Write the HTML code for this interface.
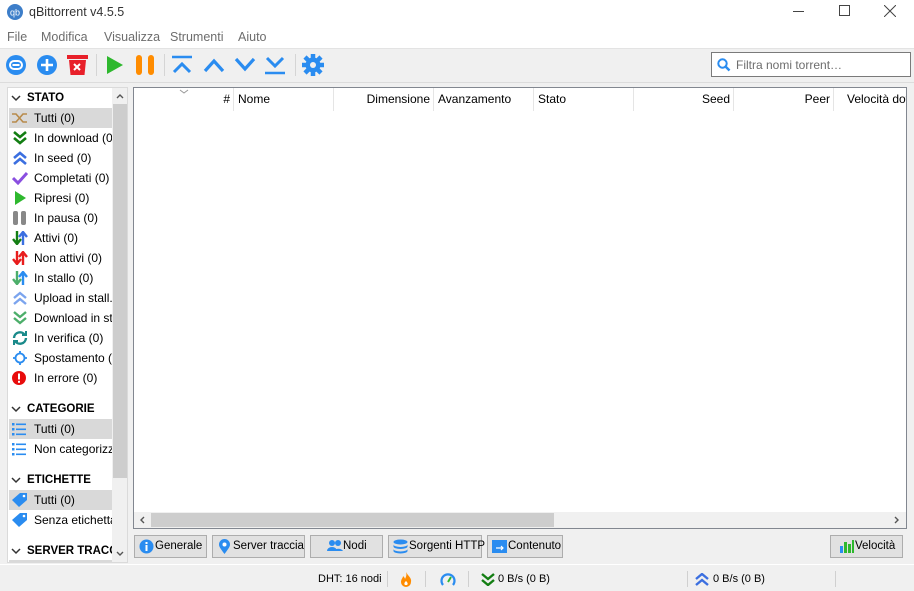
<!DOCTYPE html>
<html><head><meta charset="utf-8"><style>
*{box-sizing:border-box;margin:0;padding:0}
body{width:914px;height:589px;overflow:hidden;background:#f0f0f0;font-family:"Liberation Sans",sans-serif;font-size:12px;color:#000;position:relative}
.abs{position:absolute}
.title{left:0;top:0;width:914px;height:28px;background:#fff}
.menu{left:0;top:28px;width:914px;height:20px;background:#fff;color:#6d6d6d;font-size:12.5px}
.menu span{position:absolute;top:2px}
.side{left:7px;top:87px;width:121px;height:476px;background:#fff;border:1px solid #dadada;overflow:hidden}
.row{position:absolute;left:1px;width:103px;height:20px;line-height:20px;white-space:nowrap;overflow:hidden;font-size:12px}
.row svg{position:absolute;left:3px;top:3px}
.row span{position:absolute;left:25px}
.sel{background:#d9d9d9}
.hdr{font-weight:bold;font-size:11.5px}
.list{left:133px;top:87px;width:774px;height:442px;background:#fff;border:1px solid #828790;overflow:hidden}
.th{position:absolute;top:0;height:23px;line-height:23px;border-right:1px solid #e5e5e5;padding:0 3px;white-space:nowrap;overflow:hidden}
.btn{position:absolute;top:535px;height:23px;background:#e1e1e1;border:1px solid #adadad;line-height:21px;font-size:11.5px;white-space:nowrap}
.btn svg{position:absolute;left:4px;top:3px}
.btn span{position:absolute;left:20px}
.sb{top:567px;height:24px;line-height:24px;font-size:11px}
.sep{position:absolute;top:571px;width:1px;height:16px;background:#d0d0d0}
</style></head><body>
<div class="abs title">
 <svg class="abs" style="left:7px;top:4px" width="16" height="16"><circle cx="8" cy="8" r="8" fill="#3d7ec9"/><text x="8" y="11.5" font-size="9" fill="#fff" text-anchor="middle" font-family="Liberation Sans">qb</text></svg>
 <div class="abs" style="left:29px;top:5px;font-size:12.5px;color:#333">qBittorrent v4.5.5</div>
 <div class="abs" style="left:793px;top:11px;width:11px;height:1px;background:#444"></div>
 <div class="abs" style="left:839px;top:5px;width:11px;height:11px;border:1px solid #444"></div>
 <svg class="abs" style="left:884px;top:5px" width="12" height="12"><path d="M0 0L12 12M12 0L0 12" stroke="#444" stroke-width="1"/></svg>
</div>
<div class="abs menu"><span style="left:7px">File</span><span style="left:41px">Modifica</span><span style="left:104px">Visualizza</span><span style="left:170px">Strumenti</span><span style="left:238px">Aiuto</span></div>
<div class="abs" style="left:0;top:48px;width:914px;height:1px;background:#e3e3e3"></div>
<svg class="abs" style="left:0;top:50px" width="330" height="30">
 <circle cx="16" cy="15" r="10" fill="#2a8cf0"/><rect x="10" y="11" width="12" height="8" rx="4" fill="none" stroke="#fff" stroke-width="2"/><path d="M12.5 15h7" stroke="#fff" stroke-width="2"/>
 <circle cx="47" cy="15" r="10" fill="#2a8cf0"/><path d="M41 15h12M47 9v12" stroke="#fff" stroke-width="2.6"/>
 <rect x="67" y="5" width="21" height="4" fill="#e8202a"/><path d="M69 10h17l-1.5 15h-14z" fill="#e8202a"/><path d="M74 14l6 6M80 14l-6 6" stroke="#fff" stroke-width="2"/>
 <rect x="96" y="4" width="1" height="22" fill="#d5d5d5"/>
 <path d="M107 6l16 9-16 9z" fill="#2eb82e"/>
 <rect x="136" y="5" width="6" height="20" rx="3" fill="#ff8c00"/><rect x="148" y="5" width="6" height="20" rx="3" fill="#ff8c00"/>
 <rect x="164" y="4" width="1" height="22" fill="#d5d5d5"/>
 <path d="M172 7h20" stroke="#2a8cf0" stroke-width="2.5"/><path d="M174 22l8-8 8 8" fill="none" stroke="#2a8cf0" stroke-width="3"/>
 <path d="M205 21l9-10 9 10" fill="none" stroke="#2a8cf0" stroke-width="3.2"/>
 <path d="M236 9l9 10 9-10" fill="none" stroke="#2a8cf0" stroke-width="3.2"/>
 <path d="M267 8l8 8 8-8" fill="none" stroke="#2a8cf0" stroke-width="3"/><path d="M265 23h20" stroke="#2a8cf0" stroke-width="2.5"/>
 <rect x="295" y="4" width="1" height="22" fill="#d5d5d5"/>
 <circle cx="313" cy="15" r="7.5" fill="#2a8cf0"/><g stroke="#2a8cf0" stroke-width="4.5"><path d="M313 4v22M302 15h22M305 7l16 16M321 7l-16 16"/></g><circle cx="313" cy="15" r="3" fill="#f0f0f0"/>
</svg>
<div class="abs" style="left:711px;top:52px;width:200px;height:25px;background:#fff;border:1px solid #7a7a7a">
 <svg class="abs" style="left:5px;top:5px" width="14" height="14"><circle cx="5.5" cy="5.5" r="4.2" fill="none" stroke="#2a8cf0" stroke-width="2"/><path d="M8.5 8.5l4 4" stroke="#2a8cf0" stroke-width="2.5"/></svg>
 <div class="abs" style="left:24px;top:5px;color:#6d6d6d;font-size:12px">Filtra nomi torrent…</div>
</div>
<div class="abs" style="left:0;top:82px;width:914px;height:1px;background:#dcdcdc"></div>
<div class="abs side">
 <div class="row hdr" style="top:0"><svg width="10" height="10" style="left:2px;top:5px"><path d="M1 3l4 4 4-4" fill="none" stroke="#333" stroke-width="1.5"/></svg><span style="left:18px">STATO</span></div>
 <div class="row sel" style="top:20px"><svg width="16" height="14"><path d="M0 3h4l7 8h4M0 11h4l7-8h4" fill="none" stroke="#b78a4a" stroke-width="1.6"/></svg><span>Tutti (0)</span></div>
 <div class="row" style="top:40px"><svg width="16" height="14"><path d="M2 1l6 5 6-5M2 7l6 5 6-5" fill="none" stroke="#137e13" stroke-width="2.6"/></svg><span>In download (0)</span></div>
 <div class="row" style="top:60px"><svg width="16" height="14"><path d="M2 7l6-5 6 5M2 13l6-5 6 5" fill="none" stroke="#3b6fe0" stroke-width="2.6"/></svg><span>In seed (0)</span></div>
 <div class="row" style="top:80px"><svg width="16" height="14"><path d="M1 7l5 5 9-10" fill="none" stroke="#8a4fe0" stroke-width="3"/></svg><span>Completati (0)</span></div>
 <div class="row" style="top:100px"><svg width="16" height="14"><path d="M3 0l11 7-11 7z" fill="#2eb82e"/></svg><span>Ripresi (0)</span></div>
 <div class="row" style="top:120px"><svg width="16" height="14"><rect x="1" y="0" width="5" height="14" rx="2" fill="#888"/><rect x="9" y="0" width="5" height="14" rx="2" fill="#888"/></svg><span>In pausa (0)</span></div>
 <div class="row" style="top:140px"><svg width="16" height="14"><path d="M5 0v12M1 8l4 5 4-5" fill="none" stroke="#137e13" stroke-width="2.4"/><path d="M11 14V2M7 6l4-5 4 5" fill="none" stroke="#3b6fe0" stroke-width="2.4"/></svg><span>Attivi (0)</span></div>
 <div class="row" style="top:160px"><svg width="16" height="14"><path d="M5 0v12M1 8l4 5 4-5M11 14V2M7 6l4-5 4 5" fill="none" stroke="#e81d1d" stroke-width="2.4"/></svg><span>Non attivi (0)</span></div>
 <div class="row" style="top:180px"><svg width="16" height="14"><path d="M5 0v12M1 8l4 5 4-5" fill="none" stroke="#4cae6a" stroke-width="2.4"/><path d="M11 14V2M7 6l4-5 4 5" fill="none" stroke="#2a8cf0" stroke-width="2.4"/></svg><span>In stallo (0)</span></div>
 <div class="row" style="top:200px"><svg width="16" height="14"><path d="M2 7l6-5 6 5M2 13l6-5 6 5" fill="none" stroke="#7ba4ee" stroke-width="2.4"/></svg><span>Upload in stall.</span></div>
 <div class="row" style="top:220px"><svg width="16" height="14"><path d="M2 1l6 5 6-5M2 7l6 5 6-5" fill="none" stroke="#4cae6a" stroke-width="2.4"/></svg><span>Download in st</span></div>
 <div class="row" style="top:240px"><svg width="16" height="14"><path d="M2 7a6 6 0 0 1 11-3M14 7a6 6 0 0 1-11 3" fill="none" stroke="#1a8a8a" stroke-width="2.4"/><path d="M10 4h4V0M6 10H2v4" fill="none" stroke="#1a8a8a" stroke-width="2"/></svg><span>In verifica (0)</span></div>
 <div class="row" style="top:260px"><svg width="16" height="14"><circle cx="8" cy="7" r="4.5" fill="none" stroke="#2a8cf0" stroke-width="1.8"/><path d="M8 0v3M8 11v3M1 7h3M12 7h3" stroke="#2a8cf0" stroke-width="1.8"/></svg><span>Spostamento (0)</span></div>
 <div class="row" style="top:280px"><svg width="16" height="14"><circle cx="7" cy="7" r="7" fill="#e80c0c"/><rect x="6" y="2.5" width="2" height="6" fill="#fff"/><rect x="6" y="9.8" width="2" height="2" fill="#fff"/></svg><span>In errore (0)</span></div>
 <div class="row hdr" style="top:311px"><svg width="10" height="10" style="left:2px;top:5px"><path d="M1 3l4 4 4-4" fill="none" stroke="#333" stroke-width="1.5"/></svg><span style="left:18px">CATEGORIE</span></div>
 <div class="row sel" style="top:331px"><svg width="16" height="14"><g fill="#2a8cf0"><rect x="0" y="1" width="2.5" height="2.5"/><rect x="0" y="6" width="2.5" height="2.5"/><rect x="0" y="11" width="2.5" height="2.5"/><rect x="4" y="1.5" width="10" height="1.6"/><rect x="4" y="6.5" width="10" height="1.6"/><rect x="4" y="11.5" width="10" height="1.6"/></g></svg><span>Tutti (0)</span></div>
 <div class="row" style="top:351px"><svg width="16" height="14"><g fill="#2a8cf0"><rect x="0" y="1" width="2.5" height="2.5"/><rect x="0" y="6" width="2.5" height="2.5"/><rect x="0" y="11" width="2.5" height="2.5"/><rect x="4" y="1.5" width="10" height="1.6"/><rect x="4" y="6.5" width="10" height="1.6"/><rect x="4" y="11.5" width="10" height="1.6"/></g></svg><span>Non categorizzati</span></div>
 <div class="row hdr" style="top:382px"><svg width="10" height="10" style="left:2px;top:5px"><path d="M1 3l4 4 4-4" fill="none" stroke="#333" stroke-width="1.5"/></svg><span style="left:18px">ETICHETTE</span></div>
 <div class="row sel" style="top:402px"><svg width="16" height="14"><path d="M8 0h7v7l-8 7-7-7z" fill="#2a8cf0"/><circle cx="12" cy="3" r="1.3" fill="#fff"/></svg><span>Tutti (0)</span></div>
 <div class="row" style="top:422px"><svg width="16" height="14"><path d="M8 0h7v7l-8 7-7-7z" fill="#2a8cf0"/><circle cx="12" cy="3" r="1.3" fill="#fff"/></svg><span>Senza etichetta</span></div>
 <div class="row hdr" style="top:453px"><svg width="10" height="10" style="left:2px;top:5px"><path d="M1 3l4 4 4-4" fill="none" stroke="#333" stroke-width="1.5"/></svg><span style="left:18px">SERVER TRACCIATORI</span></div>
 <div class="abs" style="left:1px;top:472px;width:103px;height:3px;background:#d9d9d9"></div>
 <div class="abs" style="left:104px;top:0;width:16px;height:476px;background:#f0f0f0">
  <svg class="abs" style="left:4px;top:5px" width="8" height="6"><path d="M1 5l3-3 3 3" fill="none" stroke="#555" stroke-width="1.4"/></svg>
  <div class="abs" style="left:1px;top:16px;width:14px;height:374px;background:#cdcdcd"></div>
  <svg class="abs" style="left:4px;top:463px" width="8" height="6"><path d="M1 1l3 3 3-3" fill="none" stroke="#555" stroke-width="1.4"/></svg>
 </div>
</div>
<div class="abs list">
 <svg class="abs" style="left:45px;top:1px" width="10" height="6"><path d="M1 1l4 3 4-3" fill="none" stroke="#999" stroke-width="1"/></svg>
 <div class="th" style="left:0;width:100px;text-align:right">#</div>
 <div class="th" style="left:100px;width:100px;padding-left:4px">Nome</div>
 <div class="th" style="left:200px;width:100px;text-align:right">Dimensione</div>
 <div class="th" style="left:300px;width:100px;padding-left:4px">Avanzamento</div>
 <div class="th" style="left:400px;width:100px;padding-left:4px">Stato</div>
 <div class="th" style="left:500px;width:100px;text-align:right">Seed</div>
 <div class="th" style="left:600px;width:100px;text-align:right">Peer</div>
 <div class="th" style="left:700px;width:72px;border:none;padding-left:13px">Velocità download</div>
 <div class="abs" style="left:0;top:424px;width:772px;height:16px;background:#f0f0f0">
  <svg class="abs" style="left:5px;top:4px" width="6" height="8"><path d="M5 1L2 4l3 3" fill="none" stroke="#555" stroke-width="1.4"/></svg>
  <div class="abs" style="left:17px;top:1px;width:403px;height:14px;background:#cdcdcd"></div>
  <svg class="abs" style="left:760px;top:4px" width="6" height="8"><path d="M1 1l3 3-3 3" fill="none" stroke="#555" stroke-width="1.4"/></svg>
 </div>
</div>
<div class="btn" style="left:134px;width:73px"><svg width="15" height="15"><circle cx="7.5" cy="7.5" r="7" fill="#2a8cf0"/><rect x="6.5" y="6" width="2" height="6" fill="#fff"/><rect x="6.5" y="3" width="2" height="2" fill="#fff"/></svg><span>Generale</span></div>
<div class="btn" style="left:212px;width:93px"><svg width="15" height="16"><path d="M7.5 15C3 9 2 7.5 2 5.5a5.5 5.5 0 0 1 11 0c0 2-1 3.5-5.5 9.5z" fill="#2a8cf0"/><circle cx="7.5" cy="5.5" r="2" fill="#fff"/></svg><span>Server traccia</span></div>
<div class="btn" style="left:310px;width:73px"><svg width="16" height="14" style="left:16px"><circle cx="5" cy="4" r="3" fill="#2a8cf0"/><circle cx="11" cy="4" r="3" fill="#2a8cf0"/><path d="M0 12a5 4 0 0 1 10 0zM7 12a5 4 0 0 1 9 0z" fill="#2a8cf0"/></svg><span style="left:32px">Nodi</span></div>
<div class="btn" style="left:388px;width:94px"><svg width="15" height="16"><ellipse cx="7.5" cy="3" rx="7" ry="2.5" fill="#2a8cf0"/><path d="M0.5 5.5a7 2.5 0 0 0 14 0v2a7 2.5 0 0 1-14 0zM0.5 10a7 2.5 0 0 0 14 0v2a7 2.5 0 0 1-14 0z" fill="#2a8cf0"/></svg><span>Sorgenti HTTP</span></div>
<div class="btn" style="left:487px;width:76px"><svg width="15" height="15"><rect x="0" y="1" width="15" height="13" fill="#2a8cf0"/><path d="M4 9h7M9 7l2 2-2 2" fill="none" stroke="#fff" stroke-width="1.2"/></svg><span>Contenuto</span></div>
<div class="btn" style="left:830px;width:73px"><svg width="14" height="14" style="left:9px"><rect x="0" y="7" width="3" height="7" fill="#2a8cf0"/><rect x="4" y="3" width="3" height="11" fill="#2eb82e"/><rect x="8" y="5" width="3" height="9" fill="#2eb82e"/><rect x="12" y="1" width="2" height="13" fill="#2eb82e"/></svg><span style="left:24px">Velocità</span></div>
<div class="abs" style="left:0;top:564px;width:914px;height:1px;background:#fff"></div>
<div class="abs sb" style="left:318px">DHT: 16 nodi</div>
<div class="sep" style="left:387px"></div>
<svg class="abs" style="left:400px;top:572px" width="12" height="15"><path d="M6 0C8 4 12 6 11 10a5 5 0 0 1-10 0C1 7 3 6 3 4c1 1 2 2 2 3C6 5 7 3 6 0z" fill="#ff8c00"/><path d="M6 9c1 1 2 2 1.5 3.5a2 2 0 0 1-3 0C4 11 5 10 6 9z" fill="#fff"/></svg>
<div class="sep" style="left:425px"></div>
<svg class="abs" style="left:440px;top:572px" width="16" height="15"><path d="M3 13A6.5 6.5 0 1 1 13 13" fill="none" stroke="#2a8cf0" stroke-width="2.2"/><path d="M8 10l3-5" stroke="#2eb82e" stroke-width="2"/></svg>
<div class="sep" style="left:468px"></div>
<svg class="abs" style="left:481px;top:573px" width="14" height="13"><path d="M1 1l6 5 6-5M1 7l6 5 6-5" fill="none" stroke="#137e13" stroke-width="2.4"/></svg>
<div class="abs sb" style="left:498px">0 B/s (0 B)</div>
<div class="sep" style="left:687px"></div>
<svg class="abs" style="left:695px;top:573px" width="14" height="13"><path d="M1 6l6-5 6 5M1 12l6-5 6 5" fill="none" stroke="#3b6fe0" stroke-width="2.4"/></svg>
<div class="abs sb" style="left:713px">0 B/s (0 B)</div>
<div class="sep" style="left:835px"></div>
</body></html>
